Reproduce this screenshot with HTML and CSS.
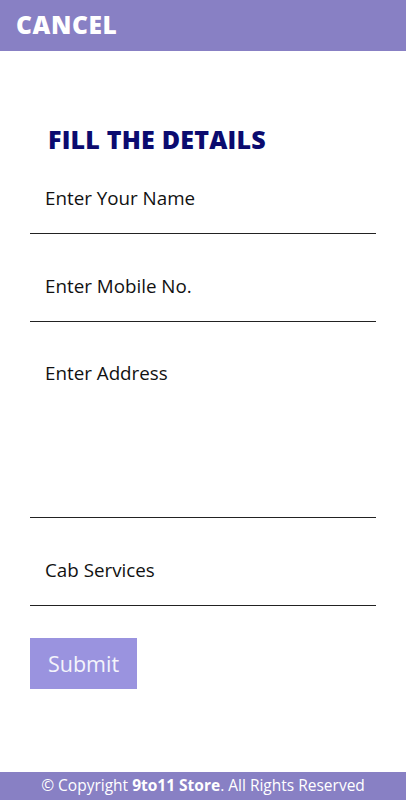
FILE: index.html
```html
<!DOCTYPE html>
<html lang="en">
<head>
    <meta charset="UTF-8">
    <meta name="viewport" content="width=device-width, initial-scale=1.0">
    <title>Fill The Details</title>
    <link rel="stylesheet" href="styles.css">
</head>
<body>
    <div class="page">
        <header class="top-bar">
            <a class="cancel" href="#">CANCEL</a>
        </header>
        <main class="form-area">
            <h1 class="title">FILL THE DETAILS</h1>
            <form class="details-form">
                <input class="field first" type="text" placeholder="Enter Your Name">
                <input class="field" type="text" placeholder="Enter Mobile No.">
                <textarea class="field address" placeholder="Enter Address"></textarea>
                <div class="field select">Cab Services</div>
                <button class="submit" type="button">Submit</button>
            </form>
        </main>
        <footer class="footer">
            &copy; Copyright <b>9to11 Store</b>. All Rights Reserved
        </footer>
    </div>
</body>
</html>
```

FILE: styles.css
```css
body {
    margin: 0;
    font-family: "Open Sans", sans-serif;
    background: #fff;
}
.page {
    display: flex;
    flex-direction: column;
    height: 800px;
}
.top-bar {
    height: 51px;
    background-color: #8880c4;
    display: flex;
    align-items: center;
    padding-left: 16px;
}
.cancel {
    color: #fff;
    text-decoration: none;
    font-weight: 800;
    font-size: 24.5px;
    letter-spacing: 0.6px;
    margin-top: -2px;
}
.form-area {
    flex: 1;
    padding: 73px 30px 0;
}
.title {
    margin: 0;
    padding-left: 18px;
    height: 30px;
    line-height: 30px;
    font-size: 25px;
    font-weight: 800;
    color: #0b0b6f;
    letter-spacing: 0.2px;
}
.details-form {
    display: flex;
    flex-direction: column;
    align-items: flex-start;
}
.field {
    display: block;
    box-sizing: content-box;
    width: calc(100% - 15px);
    height: 24px;
    line-height: 24px;
    padding: 40px 0 23px 15px;
    margin: 0;
    border: 0;
    border-bottom: 1px solid #222;
    font-family: "Open Sans", sans-serif;
    font-size: 18.8px;
    color: #111;
    background: transparent;
    outline: none;
}
.field::placeholder {
    color: #111;
    opacity: 1;
}
.field.first {
    padding-top: 32px;
}
.address {
    resize: none;
    height: 156px;
    padding-top: 39px;
    padding-bottom: 0;
}
.submit {
    margin-top: 32px;
    width: 107px;
    height: 51px;
    border: 0;
    background-color: #9a93df;
    color: #f4f4fb;
    font-family: "Open Sans", sans-serif;
    font-size: 21.5px;
    cursor: pointer;
}
.footer {
    height: 28px;
    line-height: 26px;
    background-color: #8880c4;
    color: #fff;
    text-align: center;
    font-size: 15.5px;
}
.footer b {
    font-weight: 700;
}
```
